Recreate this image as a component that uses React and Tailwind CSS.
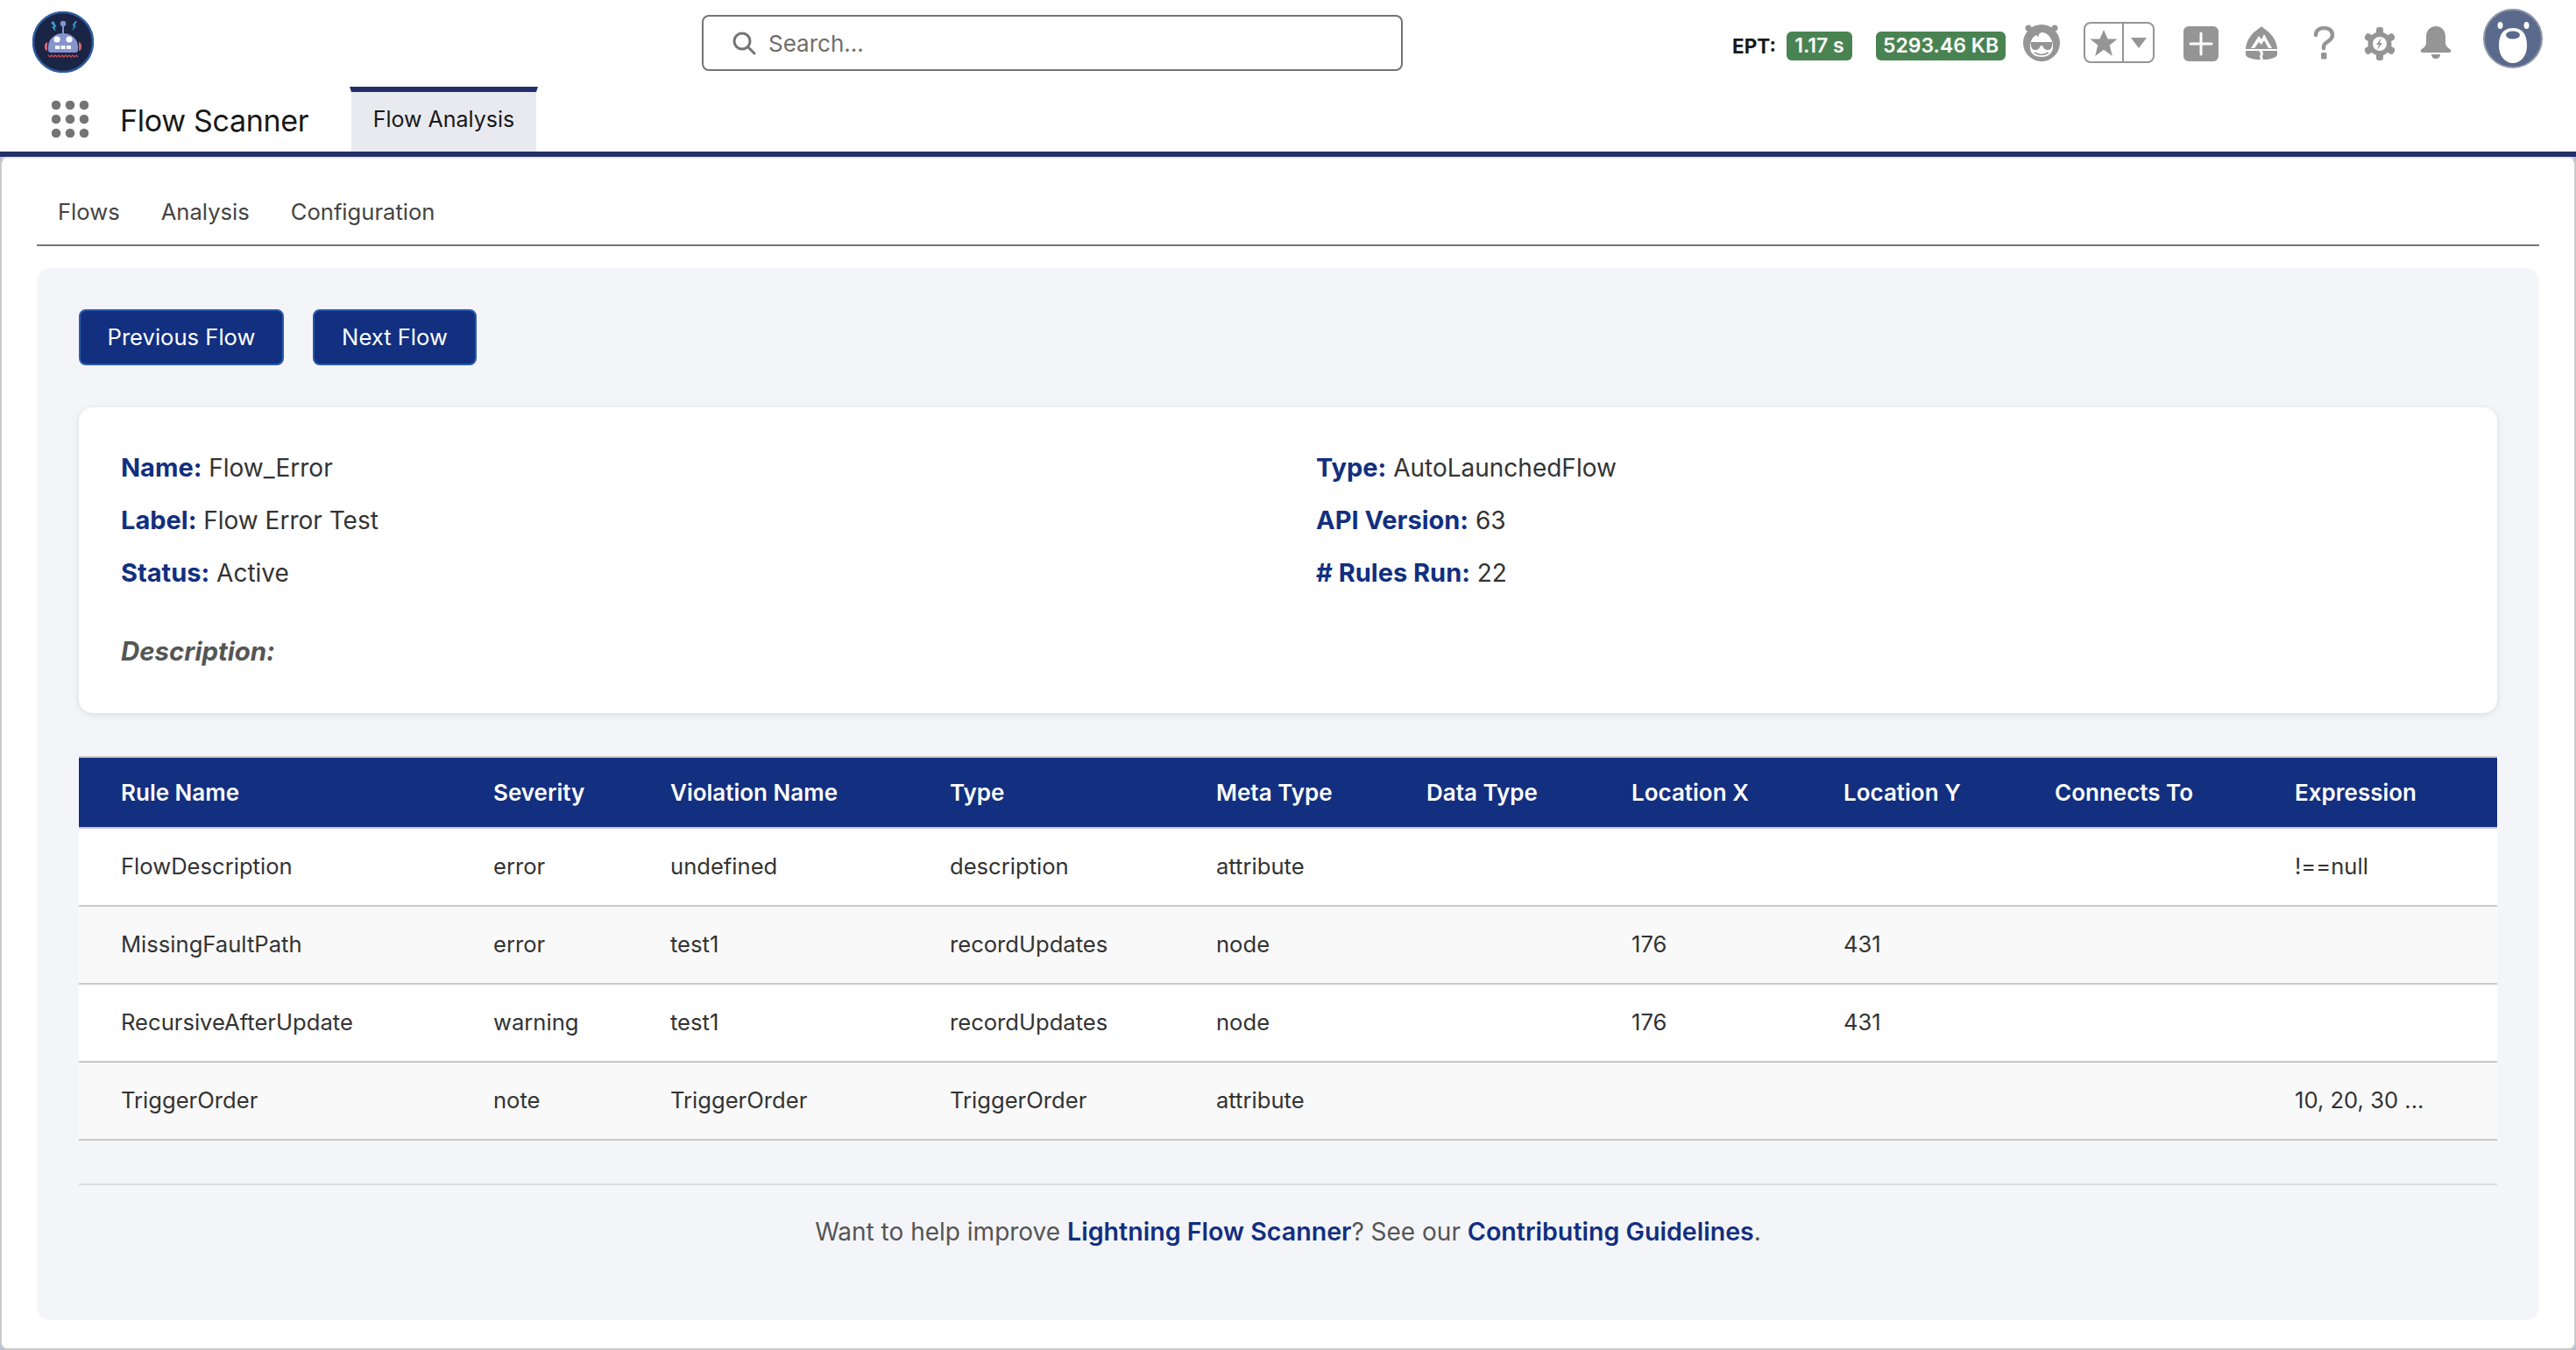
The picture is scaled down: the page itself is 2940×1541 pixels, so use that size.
import React from "react";

const Robot = () => (
  <svg width="70" height="70" viewBox="0 0 70 70">
    <circle cx="35" cy="35" r="34" fill="#1a2444" stroke="#2f5a9e" strokeWidth="2.5" />
    <path d="M35 14V25" stroke="#8594cc" strokeWidth="2" />
    <circle cx="35" cy="14" r="3.2" fill="#8594cc" />
    <path d="M21 13l3.5 4-2.5 1 4.5 5-1-5 2-.5L24 11z" fill="#3d9ccb" />
    <path d="M49 11l-3.5 5 2 .5-2.500 6 5-6-2-.5 3-4.500z" fill="#3d9ccb" />
    <path d="M18 40a17 15 0 0 1 34 0v4a3 3 0 0 1-3 3H21a3 3 0 0 1-3-3z" fill="#8594cc" />
    <path d="M17 35a4 5 0 0 0-3 6 4 4 0 0 0 3 4zM53 35a4 5 0 0 1 3 6 4 4 0 0 1-3 4z" fill="#d8686c" />
    <circle cx="28" cy="32" r="3.600" fill="#fff" />
    <circle cx="42" cy="32" r="3.600" fill="#fff" />
    <rect x="26" y="39" width="5" height="4" fill="#fff" />
    <rect x="32.500" y="39" width="5" height="4" fill="#fff" />
    <rect x="39" y="39" width="5" height="4" fill="#fff" />
    <path d="M18 50l2 2 2-2 2 2 2-2 2 2 2-2 2 2 2-2 2 2 2-2 2 2 2-2 2 2 2-2 2 2 2-2 2 2" fill="none" stroke="#c8474f" strokeWidth="1.400" />
  </svg>
);

const Dots = () => (
  <svg width="42" height="42" viewBox="0 0 42 42" fill="#747474">
    {[5, 21, 37].map((y) =>
      [5, 21, 37].map((x) => <circle key={`${x}-${y}`} cx={x} cy={y} r="5.300" />)
    )}
  </svg>
);

const Astro = () => (
  <svg width="44" height="42" viewBox="0 0 44 42">
    <circle cx="7" cy="4" r="3.500" fill="#959595" />
    <circle cx="37" cy="4" r="3.500" fill="#959595" />
    <circle cx="22" cy="21" r="21" fill="#959595" />
    <path d="M9 27c0-9 3-13 7-15 1 1 2 2 3 2-1-2 0-4 3-5 5 0 9 3 11 8 2 3 2 6 2 10-1 7-7 10-13 10S9 34 9 27z" fill="#fff" />
    <path d="M10 20h24v3c0 4-2 6-5 6s-5-2-6-5h-2c-1 3-3 5-6 5s-5-2-5-6z" fill="#959595" />
    <path d="M14 32c5 3 11 3 16 0" stroke="#959595" strokeWidth="1.500" fill="none" />
  </svg>
);

const Trail = () => (
  <svg width="38" height="38" viewBox="0 0 38 38">
    <path d="M19 0c3 3 9 6 13 12 3 4 5 10 5 14H1c0-4 2-10 5-14C10 6 16 3 19 0z" fill="#959595" />
    <path d="M1 28h15l2 3-1 4 1 3C10 38 1 36 1 32zM37 28H20l1 3-1 4 1 3c7 0 16-2 16-6z" fill="#959595" />
    <path d="M7 25l9-14 3 4 3-6 9 16h-4l-5-9-3 5-3-3-5 7z" fill="#fff" />
  </svg>
);

const Gear = () => (
  <svg width="34" height="38" viewBox="0 0 34 38">
    <g fill="#959595">
      <rect x="13" y="0" width="8" height="38" rx="3" />
      <rect x="13" y="0" width="8" height="38" rx="3" transform="rotate(60 17 19)" />
      <rect x="13" y="0" width="8" height="38" rx="3" transform="rotate(120 17 19)" />
      <circle cx="17" cy="19" r="13.500" />
    </g>
    <circle cx="17" cy="19" r="8" fill="#fff" />
    <path d="M19 12l-6 8h3l-2 6 6-8h-3z" fill="#959595" />
  </svg>
);

const Bell = () => (
  <svg width="36" height="38" viewBox="0 0 36 38" fill="#959595">
    <path d="M18 0c7 0 11 5 11 12v7c0 3 2 5 5 7 2 1 2 4-1 4H3c-3 0-3-3-1-4 3-2 5-4 5-7v-7C7 5 11 0 18 0z" />
    <path d="M13 32h10c0 3-2 5-5 5s-5-2-5-5z" />
  </svg>
);

const Question = () => (
  <svg width="25" height="38" viewBox="0 0 25 38" fill="none">
    <path d="M3 10c0-5 4-8 9-8 6 0 10 3 10 8 0 4-3 6-6 8-3 2-4 3-4 7" stroke="#959595" strokeWidth="4.500" strokeLinecap="round" />
    <rect x="9" y="30" width="6.500" height="7.500" rx="1.500" fill="#959595" />
  </svg>
);

const Bear = () => (
  <svg width="68" height="68" viewBox="0 0 68 68">
    <circle cx="34" cy="34" r="33" fill="#5a6a8c" stroke="#8e96a8" strokeWidth="2" />
    <ellipse cx="19.500" cy="19" rx="3" ry="4" fill="#fff" />
    <ellipse cx="49.500" cy="19" rx="3" ry="4" fill="#fff" />
    <path d="M34 22C44 22 50 28 50 42 50 54 43 62 34 62 25 62 18 54 18 42 18 28 24 22 34 22z" fill="#fff" />
    <ellipse cx="34" cy="30" rx="8" ry="4.500" fill="#5a6a8c" />
  </svg>
);

const columns = [
  ["Rule Name", "w-[425px]"],
  ["Severity", "w-[202px]"],
  ["Violation Name", "w-[319px]"],
  ["Type", "w-[304px]"],
  ["Meta Type", "w-[240px]"],
  ["Data Type", "w-[234px]"],
  ["Location X", "w-[242px]"],
  ["Location Y", "w-[241px]"],
  ["Connects To", "w-[274px]"],
  ["Expression", "w-[279px]"],
];

const rows = [
  ["FlowDescription", "error", "undefined", "description", "attribute", "", "", "", "", "!==null"],
  ["MissingFaultPath", "error", "test1", "recordUpdates", "node", "", "176", "431", "", ""],
  ["RecursiveAfterUpdate", "warning", "test1", "recordUpdates", "node", "", "176", "431", "", ""],
  ["TriggerOrder", "note", "TriggerOrder", "TriggerOrder", "attribute", "", "", "", "", "10, 20, 30 ..."],
];

const Field = ({ label, value }) => (
  <div className="h-[44px] text-[28px] leading-[44px] text-[#333333]">
    <span className="text-[29px] font-bold text-[#122f80]">{label}</span> {value}
  </div>
);

export default function App() {
  return (
    <div className="flex h-[1541px] w-[2940px] flex-col overflow-hidden bg-white font-['Inter',sans-serif]">
      <header className="shrink-0">
        <div className="flex h-[99px] items-start">
          <div className="ml-[37px] mt-[13px] h-[70px] w-[70px]"><Robot /></div>
          <div className="ml-[694px] mt-[17px] flex h-[64px] w-[800px] items-center rounded-lg border-2 border-[#747474] pl-[32px]">
            <svg width="28" height="28" viewBox="0 0 28 28" fill="none" stroke="#747474" strokeWidth="3" strokeLinecap="round">
              <circle cx="12" cy="12" r="9" />
              <path d="M19 19l7 7" />
            </svg>
            <span className="ml-[14px] text-[26px] text-[#706e6b]">Search...</span>
          </div>
          <div className="ml-auto flex items-start pr-[38px]">
            <span className="mt-[37px] text-[22.5px] font-bold leading-[32px] text-[#181818]">EPT:</span>
            <span className="ml-[12px] mt-[36px] flex h-[33px] w-[75px] items-center justify-center rounded-md bg-[#4a8352] text-[23px] font-semibold text-white">1.17 s</span>
            <span className="ml-[27px] mt-[36px] flex h-[33px] w-[148px] items-center justify-center rounded-md bg-[#4a8352] text-[23px] font-semibold text-white">5293.46 KB</span>
            <div className="ml-[19px] mt-[28px] h-[42px]"><Astro /></div>
            <div className="ml-[26px] mt-[25px] flex h-[47px] w-[81px] overflow-hidden rounded-lg border-2 border-[#959595]">
              <div className="flex w-[44px] items-center justify-center border-r-2 border-[#959595]">
                <svg width="32" height="30" viewBox="0 0 24 23" fill="#959595">
                  <path d="M12 0l3.500 8H24l-6.800 5.500L19.500 23 12 17.500 4.500 23l2.300-9.500L0 8h8.500z" />
                </svg>
              </div>
              <div className="flex flex-1 items-center justify-center">
                <svg width="18" height="12" viewBox="0 0 18 12" fill="#959595"><path d="M0 0h18L9 12z" /></svg>
              </div>
            </div>
            <div className="ml-[33px] mt-[30px] flex h-[40px] w-[40px] items-center justify-center rounded-md bg-[#959595]">
              <svg width="28" height="28" viewBox="0 0 28 28" stroke="#fff" strokeWidth="3" strokeLinecap="round"><path d="M14 2v24M2 14h24" /></svg>
            </div>
            <div className="ml-[30px] mt-[30px] h-[38px]"><Trail /></div>
            <div className="ml-[40px] mt-[30px] h-[38px]"><Question /></div>
            <div className="ml-[34px] mt-[31px] h-[38px]"><Gear /></div>
            <div className="ml-[29px] mt-[30px] h-[38px]"><Bell /></div>
            <div className="ml-[36px] mt-[10px] h-[68px]"><Bear /></div>
          </div>
        </div>
        <div className="flex h-[74px] items-center">
          <div className="ml-[59px] h-[42px] w-[42px]"><Dots /></div>
          <span className="ml-[36px] w-[262px] pt-[3px] text-[34px] tracking-[-0.3px] text-[#181818]">Flow Scanner</span>
          <div className="flex h-[74px] w-[215px] items-center justify-center border-x-2 border-t-[6px] border-x-white border-t-[#232f69] bg-[#e8eaf0] pb-[4px] text-[25px] text-[#181818]">
            Flow Analysis
          </div>
        </div>
        <div className="h-[6px] bg-[#232f69]" />
      </header>
      <div className="flex-1 bg-[#b9c1da]">
        <main className="h-full rounded-lg border-2 border-[#c9c9c9] border-t-[#e8e8e8] bg-white px-[40px]">
          <nav className="flex h-[100px] gap-[47px] border-b-2 border-[#747474] pl-[24px] pt-[37px] text-[25.6px] leading-[48px] text-[#444444]">
            <span>Flows</span>
            <span>Analysis</span>
            <span>Configuration</span>
          </nav>
          <section className="mt-[25px] h-[1201px] rounded-2xl bg-[#f4f5f9] px-[48px] pt-[47px]">
            <div className="flex gap-[33px]">
              <button className="h-[64px] w-[234px] rounded-lg border-2 border-[#2a5cab] bg-[#122f80] text-[25.6px] text-white">Previous Flow</button>
              <button className="h-[64px] w-[187px] rounded-lg border-2 border-[#2a5cab] bg-[#122f80] text-[25.6px] text-white">Next Flow</button>
            </div>
            <div className="mt-[48px] h-[349px] rounded-2xl bg-white px-[48px] pt-[47px] shadow-[0_2px_8px_rgba(0,0,0,0.1)]">
              <div className="grid grid-cols-2 gap-x-[64px] gap-y-[16px]">
                <Field label="Name:" value="Flow_Error" />
                <Field label="Type:" value="AutoLaunchedFlow" />
                <Field label="Label:" value="Flow Error Test" />
                <Field label="API Version:" value="63" />
                <Field label="Status:" value="Active" />
                <Field label="# Rules Run:" value="22" />
              </div>
              <div className="mt-[46px] text-[29.400px] font-bold italic leading-[44px] text-[#555555]">Description:</div>
            </div>
            <table className="mt-[49px] w-[2760px] table-fixed border-separate border-spacing-0 text-left text-[25.6px] text-[#333333]">
              <colgroup>
                {columns.map(([name, width]) => <col key={name} className={width} />)}
              </colgroup>
              <thead>
                <tr>
                  {columns.map(([name]) => (
                    <th key={name} className="h-[83px] border-y-2 border-[#c9c9c9] bg-[#122f80] pl-[48px] text-[26px] font-semibold text-white">
                      {name}
                    </th>
                  ))}
                </tr>
              </thead>
              <tbody>
                {rows.map((row, r) => (
                  <tr key={row[0]} className={r % 2 ? "bg-[#f9f9f9]" : "bg-white"}>
                    {row.map((cell, c) => (
                      <td key={c} className="h-[89px] border-b-2 border-[#c9c9c9] pl-[48px]">{cell}</td>
                    ))}
                  </tr>
                ))}
              </tbody>
            </table>
            <footer className="mt-[49px] border-t-2 border-[#dddde1] pt-[31px] text-center text-[28px] leading-[44px] text-[#555555]">
              Want to help improve <a className="text-[28.6px] font-semibold text-[#122f80]">Lightning Flow Scanner</a>? See our <a className="text-[28.6px] font-semibold text-[#122f80]">Contributing Guidelines</a>.
            </footer>
          </section>
        </main>
      </div>
    </div>
  );
}
